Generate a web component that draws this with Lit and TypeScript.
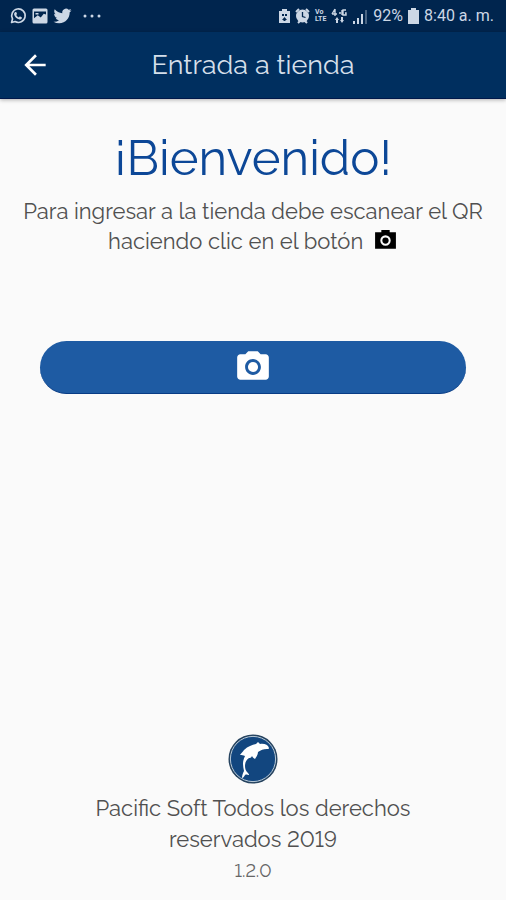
import { LitElement, html, css, svg } from "lit";
import { customElement } from "lit/decorators.js";

const cameraShape = svg`
  <circle cx="12" cy="12" r="3.2"/>
  <path d="M9 2 7.17 4H4c-1.1 0-2 .9-2 2v12c0 1.1.9 2 2 2h16c1.1 0 2-.9 2-2V6c0-1.1-.9-2-2-2h-3.17L15 2H9zm3 15c-2.76 0-5-2.24-5-5s2.24-5 5-5 5 2.24 5 5-2.24 5-5 5z"/>`;

@customElement("status-bar")
class StatusBar extends LitElement {
  static styles = css`
    :host {
      display: flex;
      align-items: center;
      justify-content: space-between;
      height: 32px;
      padding: 0 12px 0 9px;
      box-sizing: border-box;
      background: #00254e;
      color: #ccd7e5;
      font: 400 16px/20px Roboto, sans-serif;
      white-space: nowrap;
    }
    .group { display: flex; align-items: center; gap: 5px; }
    .start { gap: 4px; }
    svg { display: block; fill: currentColor; }
    .more { margin-left: 7px; }
    .lte { display: flex; flex-direction: column; font-size: 7px; line-height: 7px; font-weight: 700; }
  `;
  render() {
    return html`
      <div class="group start">
        <svg width="18" height="18" viewBox="0 0 24 24" aria-label="WhatsApp">
          <path d="M3.4 20.7 4.7 16A9 9 0 1 1 8.1 19.4z" fill="none" stroke="currentColor" stroke-width="2.2" stroke-linejoin="round"/>
          <path d="M8.5 6.8c.5-.4 1.1-.3 1.3.2l.8 1.9c.1.3 0 .6-.2.8l-.8 1c.8 1.5 2 2.6 3.5 3.2l1-1.1c.2-.3.5-.3.8-.2l1.9.9c.5.3.5.6.4 1.1-.4 1.5-1.9 2.2-3.3 1.9-3.6-.7-6.2-3.3-7-6.3-.3-1.3.4-2.7 1.6-3.4z"/>
        </svg>
        <svg width="18" height="18" viewBox="0 0 24 24" aria-label="Imagen">
          <path d="M4 2h16q2 0 2 2v16q0 2-2 2H4q-2 0-2-2V4q0-2 2-2zm0 4v9l5-4 4 3 4-5 3 1V6zM6 8h4v2H6z" fill-rule="evenodd"/>
        </svg>
        <svg width="19" height="18" viewBox="0 0 24 24" aria-label="Twitter">
          <path d="M23.95 4.57a10 10 0 0 1-2.82.775 4.96 4.96 0 0 0 2.16-2.723c-.95.555-2.01.959-3.13 1.184a4.92 4.92 0 0 0-8.38 4.482C7.69 8.095 4.07 6.13 1.64 3.162a4.82 4.82 0 0 0-.666 2.475c0 1.71.87 3.213 2.19 4.096a4.9 4.9 0 0 1-2.23-.616v.06a4.92 4.92 0 0 0 3.95 4.827 5 5 0 0 1-2.21.085 4.94 4.94 0 0 0 4.6 3.417 9.87 9.87 0 0 1-6.1 2.105c-.39 0-.78-.023-1.17-.067a13.99 13.99 0 0 0 7.56 2.209c9.05 0 14-7.496 14-13.985 0-.21 0-.42-.015-.63a9.94 9.94 0 0 0 2.46-2.548z"/>
        </svg>
        <svg class="more" width="18" height="4" viewBox="0 0 18 4" aria-label="Más">
          <circle cx="2" cy="2" r="1.5"/><circle cx="9" cy="2" r="1.5"/><circle cx="16" cy="2" r="1.5"/>
        </svg>
      </div>
      <div class="group">
        <svg width="11" height="16" viewBox="0 0 11 16">
          <path d="M3 1h5v2h3v12H0V3h3zM3 6h2v2H3zm3 0h2v2H6zm-3 6 2.5-3L8 12H6.5v1h-2v-1z" fill-rule="evenodd"/>
        </svg>
        <svg width="15" height="16" viewBox="0 0 15 16">
          <path d="M1 4 4 1M14 4l-3-3M3 15l2-2M12 15l-2-2" stroke="currentColor" stroke-width="2"/>
          <circle cx="7.5" cy="8" r="6.5"/>
          <path d="M7.5 4v4.5l3 1" fill="none" stroke="#00254e" stroke-width="1.3"/>
        </svg>
        <span class="lte"><span>Vo</span><span>LTE</span></span>
        <svg width="17" height="16" viewBox="0 0 17 16">
          <path d="M4 1v7M1 6h5M4 1 1 6M8 5h2M15 2h-3v5h3V5h-1M11 2v5" fill="none" stroke="currentColor" stroke-width="1.4"/>
          <path d="m4 12 2-3 2 3H7v3H5v-3zM9 12h1V9h2v3h1l-2 3z"/>
        </svg>
        <svg width="15" height="15" viewBox="0 0 15 15">
          <path d="M0 12h2v3H0zM4 9h2v6H4zM8 5h2v10H8z"/><path d="M12 1h2v14h-2z" opacity=".35"/>
        </svg>
        <span>92%</span>
        <svg width="11" height="16" viewBox="0 0 11 16"><path d="M3 0h5v2h3v14H0V2h3z"/></svg>
        <span>8:40 a. m.</span>
      </div>`;
  }
}

@customElement("app-root")
class AppRoot extends LitElement {
  static styles = css`
    :host {
      display: flex;
      flex-direction: column;
      min-height: 100vh;
      background: #fafafa;
      color: #505050;
      font-family: Raleway, Lato, sans-serif;
      font-weight: 400;
      font-variant-numeric: lining-nums;
    }
    svg { fill: currentColor; }
    .toolbar {
      display: grid;
      grid-template-columns: 72px 1fr 72px;
      align-items: center;
      height: 67px;
      box-sizing: border-box;
      background: #002f5f;
      color: #fff;
      border-bottom: 1px solid #00184a;
      box-shadow: 0 1px 4px rgba(0, 0, 0, .3);
    }
    .back {
      display: flex;
      justify-self: start;
      margin-left: 19px;
      padding: 0;
      border: 0;
      background: none;
      color: inherit;
      cursor: pointer;
    }
    .title {
      margin: 0;
      text-align: center;
      font-size: 27px;
      line-height: 32px;
      font-weight: 400;
      color: #d5dfea;
    }
    .main {
      flex: 1;
      padding: 29px 16px 0;
      text-align: center;
    }
    .welcome {
      margin: 0 0 8px;
      color: #0c4797;
      font-size: 49px;
      line-height: 60px;
      font-weight: 400;
    }
    .lead { margin: 0; font-size: 22px; line-height: 30px; }
    .lead svg { margin-left: 4px; color: #000; vertical-align: -4px; }
    .scan {
      display: flex;
      align-items: center;
      justify-content: center;
      width: calc(100% - 48px);
      height: 53px;
      margin: 85px auto 0;
      padding: 0;
      border: 0;
      border-bottom: 1px solid #083c85;
      border-radius: 27px;
      background: #1e5ba3;
      color: #fff;
      cursor: pointer;
    }
    .footer {
      display: flex;
      flex-direction: column;
      align-items: center;
      padding: 0 80px 17px;
      text-align: center;
    }
    .copy { margin: 9px 0 0; font-size: 22px; line-height: 31px; }
    .version { margin: 4px 0 0; font-size: 18px; line-height: 24px; color: #666; }
  `;
  render() {
    return html`
      <status-bar></status-bar>
      <header class="toolbar">
        <button class="back" aria-label="Volver">
          <svg width="32" height="32" viewBox="0 0 24 24"><path d="M20 11H7.83l5.59-5.59L12 4l-8 8 8 8 1.41-1.41L7.83 13H20v-2z"/></svg>
        </button>
        <h1 class="title">Entrada a tienda</h1>
      </header>
      <main class="main">
        <h2 class="welcome">¡Bienvenido!</h2>
        <p class="lead">Para ingresar a la tienda debe escanear el QR haciendo clic en el botón
          <svg width="25" height="25" viewBox="0 0 24 24" aria-hidden="true">
            <circle cx="12" cy="12" r="3"/>
            <path d="M8 2h8v2h6v16H2V4h6zm4 5a5 5 0 1 0 0 10 5 5 0 0 0 0-10z"/>
          </svg>
        </p>
        <button class="scan" aria-label="Escanear QR">
          <svg width="38" height="38" viewBox="0 0 24 24">${cameraShape}</svg>
        </button>
      </main>
      <footer class="footer">
        <svg width="50" height="50" viewBox="0 0 50 50" role="img" aria-label="Pacific Soft">
          <circle cx="25" cy="25" r="24.5" fill="#26435f"/>
          <circle cx="25" cy="25" r="22.6" fill="#12467f" stroke="#b9cad8" stroke-width="1"/>
          <path d="M12 21c1-2 3-3 4-5 4-4 8-5 12-6l2-2 2 2c4-.7 8 .5 9 4 0 1-1 1-2 1-4 0-6 1-9 3 0 3-2 5-3 7-1-1-2-1-3-3-1 2-2 2-3 2-3 2-4 5-4 8 0 3 1 5 2 6 1 1 2 2 2 3-2 0-2-1-4 0-1 2-2 3-3 3 0-3 1-5 2-7-1-5-2-9 1-15-2-1-3-1-5-1z" fill="#fff"/>
        </svg>
        <p class="copy">Pacific Soft Todos los derechos reservados 2019</p>
        <p class="version">1.2.0</p>
      </footer>`;
  }
}
